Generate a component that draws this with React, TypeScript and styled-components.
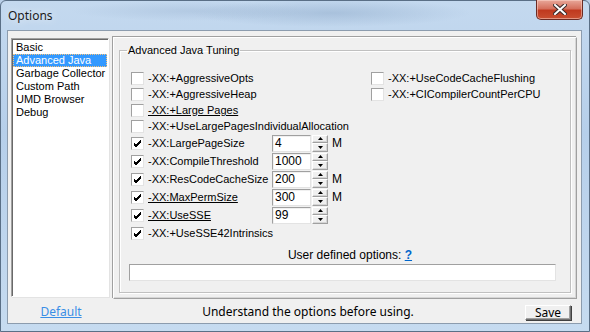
import React from 'react';
import styled, {createGlobalStyle} from 'styled-components';

const Global = createGlobalStyle`
    html, body {
        margin: 0;
        padding: 0;
        width: 590px;
        height: 332px;
        overflow: hidden;
        background: #b9cfe8;
    }
    * {
        box-sizing: border-box;
    }
`

const Frame = styled.div`
    width: 590px;
    height: 332px;
    display: flex;
    flex-direction: column;
    padding: 0 7px 7px 6px;
    border-radius: 6px 6px 0 0;
    border: 1px solid #5a6f86;
    background:
        radial-gradient(ellipse 140px 14px at 330px 12px, rgba(120, 150, 185, 0.35), transparent),
        radial-gradient(ellipse 120px 10px at 190px 10px, rgba(150, 175, 205, 0.35), transparent),
        linear-gradient(180deg, #c4d9ef 0%, #b6cfea 40%, #c6dbf0 100%);
    font-family: "Liberation Sans", Arial, sans-serif;
`

const TitleBar = styled.div`
    height: 29px;
    display: flex;
    align-items: flex-start;
    justify-content: space-between;
`

const Title = styled.div`
    font-family: "Noto Sans", "Open Sans", sans-serif;
    font-size: 12px;
    color: #1b1b1b;
    padding-top: 6px;
    padding-left: 1px;
    text-shadow: 0 0 8px rgba(255, 255, 255, 0.9);
`

const CloseButton = styled.div`
    width: 47px;
    height: 20px;
    margin-top: -1px;
    margin-right: -1px;
    border: 1px solid #6b2b24;
    border-top: none;
    border-radius: 0 0 5px 5px;
    background: linear-gradient(180deg, #e8a89a 0%, #d5705d 45%, #c0391f 55%, #c94f31 100%);
    box-shadow: inset 0 0 0 1px rgba(255, 220, 210, 0.5);
    display: flex;
    align-items: center;
    justify-content: center;
`

const Client = styled.div`
    flex: 1;
    display: flex;
    flex-direction: column;
    background: #f0f0f0;
    border: 1px solid #8c9cae;
    padding: 6px 3px 0 3px;
`

const Body = styled.div`
    display: flex;
    gap: 4px;
    height: 262px;
`

const ListBox = styled.div`
    width: 98px;
    margin-top: 1px;
    height: 259px;
    background: #fff;
    border-top: 1px solid #a0a0a0;
    border-left: 1px solid #a0a0a0;
    border-right: 1px solid #fff;
    border-bottom: 1px solid #fff;
    box-shadow: inset 1px 1px 0 #696969, 1px 1px 0 #e3e3e3;
    padding: 2px 1px;
    font-size: 11px;
    color: #000;
`

const ListItem = styled.div<{ $selected?: boolean }>`
    height: 13px;
    line-height: 13px;
    padding-left: 3px;
    white-space: nowrap;
    background: ${p => p.$selected ? '#3399ff' : 'transparent'};
    color: ${p => p.$selected ? '#fff' : '#000'};
    outline: ${p => p.$selected ? '1px dotted #f7c37b' : 'none'};
    outline-offset: -1px;
`

const Panel = styled.div`
    flex: 1;
    border: 1px solid #a0a0a0;
    border-top-color: #fff;
    border-left-color: #fff;
    box-shadow: inset -1px -1px 0 #d6d6d6, -1px -1px 0 #a0a0a0;
    padding: 6px 5px 5px 5px;
    display: flex;
    margin-right: 1px;
`

const Group = styled.fieldset`
    flex: 1;
    margin: 0;
    padding: 14px 9px 0 9px;
    border: 1px solid #c0c0c0;
    box-shadow: 1px 1px 0 #fff, inset 1px 1px 0 #fff;
    font-size: 11px;
    color: #000;
    min-width: 0;
    display: flex;
    flex-direction: column;
`

const Legend = styled.legend`
    padding: 0 1px;
    margin-left: -2px;
    font-size: 11px;
    line-height: 12px;
`

const Columns = styled.div`
    display: grid;
    grid-template-columns: 240px 1fr;
    margin-left: 2px;
`

const Column = styled.div`
    display: flex;
    flex-direction: column;
`

const Row = styled.div<{ $tall?: boolean }>`
    height: ${p => p.$tall ? 18 : 16}px;
    display: flex;
    align-items: center;
`

const Box = styled.span`
    width: 13px;
    height: 13px;
    flex: none;
    background: #fff;
    border-top: 1px solid #a0a0a0;
    border-left: 1px solid #a0a0a0;
    border-right: 1px solid #e3e3e3;
    border-bottom: 1px solid #e3e3e3;
    display: flex;
    align-items: center;
    justify-content: center;
    margin-right: 4px;
`

const Label = styled.span<{ $underline?: boolean }>`
    white-space: nowrap;
    text-decoration: ${p => p.$underline ? 'underline' : 'none'};
    text-underline-offset: 1px;
`

const LabelCell = styled.span`
    width: 124px;
    flex: none;
`

const NumberBox = styled.div`
    width: 39px;
    height: 17px;
    background: #fff;
    border-top: 1px solid #a0a0a0;
    border-left: 1px solid #a0a0a0;
    border-right: 1px solid #e3e3e3;
    border-bottom: 1px solid #e3e3e3;
    box-shadow: inset 1px 1px 0 #f0f0f0;
    padding-left: 2px;
    line-height: 15px;
    font-size: 12px;
`

const Spin = styled.div`
    width: 16px;
    height: 17px;
    margin-left: 1px;
    display: flex;
    flex-direction: column;
`

const SpinButton = styled.div`
    flex: 1;
    background: #f0f0f0;
    border: 1px solid #a0a0a0;
    border-top-color: #fff;
    border-left-color: #fff;
    box-shadow: inset -1px -1px 0 #d6d6d6;
    display: flex;
    align-items: center;
    justify-content: center;
`

const Unit = styled.span`
    margin-left: 4px;
    font-size: 12px;
`

const UserLabel = styled.div`
    margin-top: 6px;
    text-align: center;
    padding-left: 10px;
    line-height: 14px;
    font-size: 12px;
`

const HelpLink = styled.span`
    color: #0066cc;
    font-weight: bold;
    text-decoration: underline;
`

const UserInput = styled.div`
    margin-top: 2px;
    height: 17px;
    background: #fff;
    border-top: 1px solid #a0a0a0;
    border-left: 1px solid #a0a0a0;
    border-right: 1px solid #e3e3e3;
    border-bottom: 1px solid #e3e3e3;
    margin-right: 5px;
`

const Footer = styled.div`
    flex: 1;
    display: flex;
    align-items: center;
    font-family: "Noto Sans", "Open Sans", sans-serif;
    font-size: 12px;
    color: #000;
`

const DefaultLink = styled.span`
    width: 100px;
    text-align: center;
    color: #3a8ee6;
    text-decoration: underline;
`

const Status = styled.span`
    flex: 1;
    text-align: center;
    padding-right: 20px;
`

const SaveButton = styled.div`
    width: 46px;
    height: 15px;
    margin-right: 7px;
    margin-top: 3px;
    border: 1px solid #707070;
    border-top-color: #fff;
    border-left-color: #fff;
    box-shadow: 1px 1px 0 #404040, inset -1px -1px 0 #a0a0a0;
    background: #f0f0f0;
    display: flex;
    align-items: center;
    justify-content: center;
    line-height: 13px;
`

const Check = () => (
    <svg width="9" height="9" viewBox="0 0 9 9">
        <path d="M1 4 L3 6 L8 1 M1 5 L3 7 L8 2 M1 6 L3 8 L8 3" stroke="#000" strokeWidth="1" fill="none"/>
    </svg>
)

const Arrow = ({down}: { down?: boolean }) => (
    <svg width="5" height="3" viewBox="0 0 5 3">
        <path d={down ? 'M0 0 H5 L2.5 3 Z' : 'M0 3 H5 L2.5 0 Z'} fill="#000"/>
    </svg>
)

interface OptionProps {
    label: string;
    checked?: boolean;
    underline?: boolean;
    tall?: boolean;
    value?: string;
    unit?: string;
}

const Option = ({label, checked, underline, tall, value, unit}: OptionProps) => (
    <Row $tall={tall}>
        <Box>{checked && <Check/>}</Box>
        {value === undefined
            ? <Label $underline={underline}>{label}</Label>
            : <>
                <LabelCell><Label $underline={underline}>{label}</Label></LabelCell>
                <NumberBox>{value}</NumberBox>
                <Spin>
                    <SpinButton><Arrow/></SpinButton>
                    <SpinButton><Arrow down/></SpinButton>
                </Spin>
                {unit && <Unit>{unit}</Unit>}
            </>}
    </Row>
)

const pages = ['Basic', 'Advanced Java', 'Garbage Collector', 'Custom Path', 'UMD Browser', 'Debug'];

export default function App() {
    return <>
        <Global/>
        <Frame>
            <TitleBar>
                <Title>Options</Title>
                <CloseButton>
                    <svg width="14" height="11" viewBox="0 0 14 11">
                        <path d="M2 1 L12 10 M12 1 L2 10" stroke="#3b2a2a" strokeWidth="4" strokeLinecap="square"/>
                        <path d="M2 1 L12 10 M12 1 L2 10" stroke="#fff" strokeWidth="2" strokeLinecap="square"/>
                    </svg>
                </CloseButton>
            </TitleBar>
            <Client>
                <Body>
                    <ListBox>
                        {pages.map(p => <ListItem key={p} $selected={p === 'Advanced Java'}>{p}</ListItem>)}
                    </ListBox>
                    <Panel>
                        <Group>
                            <Legend>Advanced Java Tuning</Legend>
                            <Columns>
                                <Column>
                                    <Option label="-XX:+AggressiveOpts"/>
                                    <Option label="-XX:+AggressiveHeap"/>
                                    <Option label="-XX:+Large Pages" underline/>
                                    <Option label="-XX:+UseLargePagesIndividualAllocation"/>
                                    <Option label="-XX:LargePageSize" checked tall value="4" unit="M"/>
                                    <Option label="-XX:CompileThreshold" checked tall value="1000"/>
                                    <Option label="-XX:ResCodeCacheSize" checked tall value="200" unit="M"/>
                                    <Option label="-XX:MaxPermSize" checked tall underline value="300" unit="M"/>
                                    <Option label="-XX:UseSSE" checked tall underline value="99"/>
                                    <Option label="-XX:+UseSSE42Intrinsics" checked tall/>
                                </Column>
                                <Column>
                                    <Option label="-XX:+UseCodeCacheFlushing"/>
                                    <Option label="-XX:+CICompilerCountPerCPU"/>
                                </Column>
                            </Columns>
                            <UserLabel>User defined options: <HelpLink>?</HelpLink></UserLabel>
                            <UserInput/>
                        </Group>
                    </Panel>
                </Body>
                <Footer>
                    <DefaultLink>Default</DefaultLink>
                    <Status>Understand the options before using.</Status>
                    <SaveButton>Save</SaveButton>
                </Footer>
            </Client>
        </Frame>
    </>
}
